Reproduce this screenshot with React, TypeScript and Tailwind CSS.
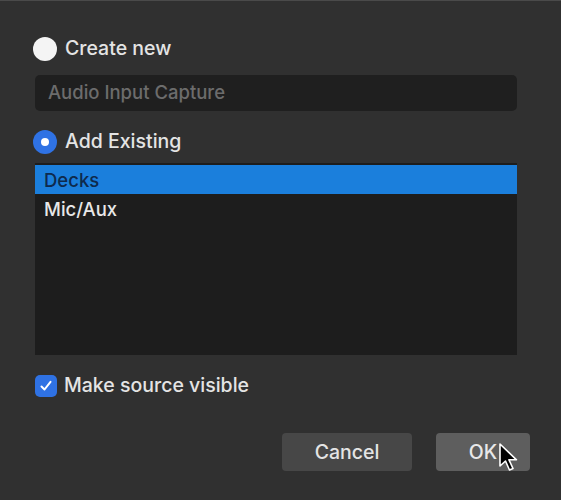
import React from 'react';

const FONT = 'font-["Inter","Liberation_Sans",sans-serif]';

const Cursor = () => (
    <svg className="absolute left-[498px] top-[442px]" width="22" height="30" viewBox="0 0 22 30">
        <path
            d="M2 1 L2 23 L7.5 18 L11.5 27 L15 25.5 L11 16.8 L18.5 16.8 Z"
            fill="#000"
            stroke="#fff"
            strokeWidth="1.6"
            strokeLinejoin="round"
        />
    </svg>
);

export default function App() {
    return (
        <div className={`relative w-[561px] h-[500px] bg-[#303030] border-t border-[#4a4a4a] overflow-hidden text-[#e4e4e4] font-medium ${FONT}`}>
            <div className="flex flex-col pl-[33px] pr-[44px] pt-[35px]">
                {/* Create new */}
                <label className="flex items-center gap-[8px] h-[26px]">
                    <span className="size-[24px] rounded-full bg-[#f4f4f4]" />
                    <span className="text-[19.5px]">Create new</span>
                </label>

                <div className="ml-[2px] mt-[13px] h-[36px] rounded-[5px] bg-[#1f1f1f] flex items-center px-[13px]">
                    <span className="text-[18.5px] text-[#6c6c6c]">Audio Input Capture</span>
                </div>

                {/* Add Existing */}
                <label className="flex items-center gap-[8px] h-[26px] mt-[18px]">
                    <span className="size-[24px] rounded-full bg-[#2f72e4] flex items-center justify-center">
                        <span className="size-[8px] rounded-full bg-white" />
                    </span>
                    <span className="text-[19.5px]">Add Existing</span>
                </label>

                <div className="ml-[2px] mt-[8px] h-[192px] bg-[#1d1d1d] pt-[2px] flex flex-col">
                    <div className="h-[29px] bg-[#1b7fdc] flex items-center px-[9px] pt-[2px] text-[18.5px] text-[#0e2a4c]">
                        Decks
                    </div>
                    <div className="h-[30px] flex items-center px-[9px] pt-[2px] text-[18.5px] text-[#e8e8e8]">
                        Mic/Aux
                    </div>
                </div>

                {/* Make source visible */}
                <label className="flex items-center gap-[7px] mt-[16px] ml-[2px]">
                    <span className="size-[22px] rounded-[5px] bg-[#2f72e4] flex items-center justify-center">
                        <svg width="14" height="14" viewBox="0 0 14 14">
                            <path d="M2.5 7.5 L5.5 10.5 L11.5 2.8" fill="none" stroke="#fff" strokeWidth="2" strokeLinecap="round" strokeLinejoin="round" />
                        </svg>
                    </span>
                    <span className="text-[19.5px]">Make source visible</span>
                </label>

                <div className="flex justify-end gap-[24px] mt-[33px] -mr-[13px]">
                    <button className="w-[130px] h-[38px] rounded-[4px] bg-[#474747] text-[19.5px] text-[#e4e4e4]">
                        Cancel
                    </button>
                    <button className="w-[94px] h-[38px] rounded-[4px] bg-[#5e5e5e] text-[19.5px] text-[#e8e8e8]">
                        OK
                    </button>
                </div>
            </div>
            <Cursor />
        </div>
    );
}
